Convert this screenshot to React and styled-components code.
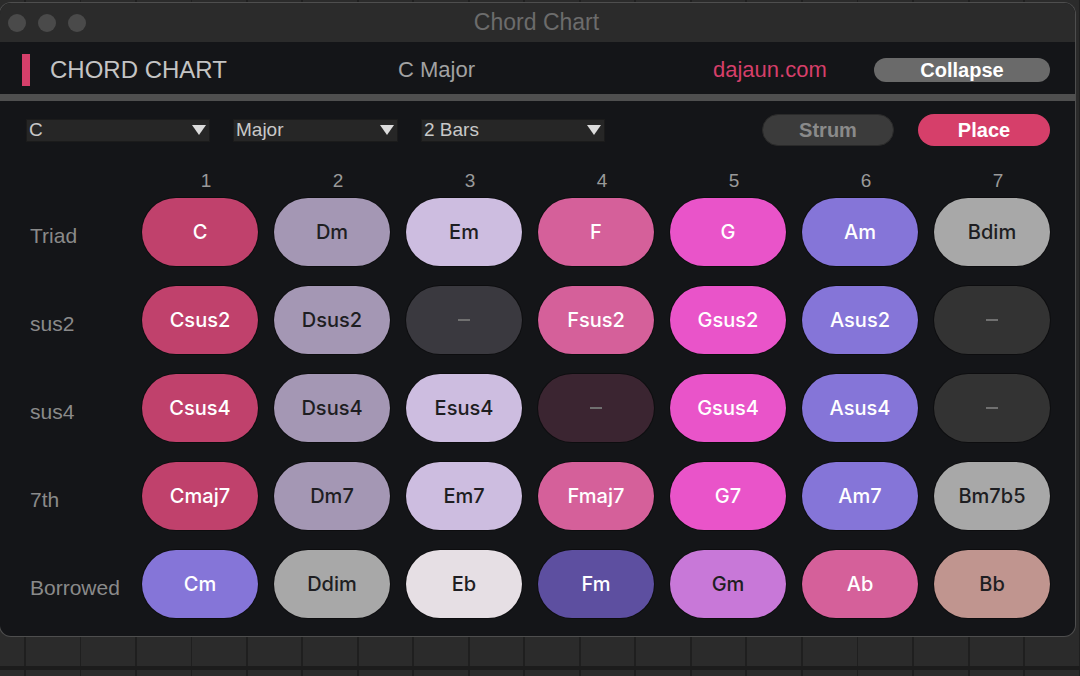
import React from "react";
import styled, { createGlobalStyle } from "styled-components";

const Global = createGlobalStyle`
  html, body { margin: 0; padding: 0; }
  body {
    width: 1080px;
    height: 676px;
    overflow: hidden;
    background-color: #2b2b2b;
    background-image:
      linear-gradient(to bottom, transparent 666px, #1c1c1c 666px, #1c1c1c 670px, transparent 670px),
      repeating-linear-gradient(to right, transparent 0, transparent 24px, #1f1f1f 24px, #1f1f1f 26px, transparent 26px, transparent 55.5px);
    font-family: "Liberation Sans", Arial, sans-serif;
  }
`;

const Page = styled.div`
  padding-top: 3px;
`;

const Window = styled.div`
  width: 1075px;
  height: 633px;
  border-radius: 11px;
  overflow: hidden;
  background: #141518;
  box-shadow: 0 0 0 1px #4e4e4e;
  display: flex;
  flex-direction: column;
`;

const TitleBar = styled.div`
  height: 39px;
  flex: none;
  background: #2b2b2b;
  display: grid;
  grid-template-columns: 1fr auto 1fr;
  align-items: center;
  padding-left: 8px;
  padding-right: 110px;
`;

const Lights = styled.div`
  display: flex;
  gap: 12px;
`;

const Light = styled.span`
  width: 18px;
  height: 18px;
  border-radius: 50%;
  background: #4a4a4a;
`;

const WindowTitle = styled.div`
  color: #6c6c6c;
  font-size: 23px;
  font-weight: 400;
  padding-left: 100px;
`;

const Header = styled.div`
  height: 52px;
  box-sizing: border-box;
  padding-top: 4px;
  flex: none;
  display: grid;
  grid-template-columns: 376px 315px 161px 176px;
  align-items: center;
  padding-left: 22px;
`;

const Brand = styled.div`
  display: flex;
  align-items: center;
  gap: 20px;
`;

const BrandBar = styled.span`
  width: 8px;
  height: 32px;
  background: #d63f6a;
`;

const BrandText = styled.span`
  color: #c4c4c4;
  font-size: 24px;
`;

const KeyName = styled.span`
  color: #a2a2a2;
  font-size: 22px;
`;

const Link = styled.span`
  color: #d63f6a;
  font-size: 22px;
`;

const PillButton = styled.button`
  height: ${(p) => p.$h}px;
  width: ${(p) => p.$w}px;
  border-radius: ${(p) => p.$h / 2}px;
  border: ${(p) => (p.$border ? "1px solid #2a2a2a" : "none")};
  background: ${(p) => p.$bg};
  color: ${(p) => p.$fg};
  font-family: "Liberation Sans", Arial, sans-serif;
  font-weight: 700;
  font-size: 20px;
  padding: 0;
  display: flex;
  align-items: center;
  justify-content: center;
`;

const Separator = styled.div`
  height: 7px;
  flex: none;
  background: #4f4f4f;
`;

const Controls = styled.div`
  display: flex;
  align-items: center;
  padding: 13px 25px 0 26px;
  height: 32px;
  gap: 23px;
`;

const Select = styled.div`
  width: ${(p) => p.$w}px;
  height: 23px;
  box-sizing: border-box;
  background: #262626;
  border: 1px solid #1b1b1b;
  display: flex;
  align-items: center;
  justify-content: space-between;
  padding: 0 3px 0 2px;
  color: #c9c9c9;
  font-size: 19px;
`;

const Arrow = styled.span`
  width: 0;
  height: 0;
  border-left: 7px solid transparent;
  border-right: 7px solid transparent;
  border-top: 10px solid #dcdcdc;
`;

const Spacer = styled.div`
  flex: 1;
`;

const ButtonGroup = styled.div`
  display: flex;
  gap: 24px;
`;

const ColumnHeader = styled.div`
  display: grid;
  grid-template-columns: 126px repeat(7, 116px);
  column-gap: 16px;
  margin-top: 23px;
  margin-bottom: 5px;
  height: 24px;
  align-items: center;
`;

const ColNum = styled.span`
  color: #9a9a9a;
  font-size: 19px;
  text-align: center;
  padding-left: 12px;
`;

const ChordGrid = styled.div`
  display: grid;
  grid-template-columns: 126px repeat(7, 116px);
  grid-auto-rows: 68px;
  column-gap: 16px;
  row-gap: 20px;
`;

const RowLabel = styled.div`
  color: #8a8a8a;
  font-size: 21px;
  padding-left: 30px;
  padding-top: 8px;
  display: flex;
  align-items: center;
  white-space: nowrap;
`;

const Chord = styled.div`
  border-radius: 34px;
  background: ${(p) => p.$bg};
  color: ${(p) => p.$fg};
  box-shadow: 0 0 0 1px rgba(0, 0, 0, 0.35);
  display: flex;
  align-items: center;
  justify-content: center;
  font-family: Inter, "Noto Sans", sans-serif;
  font-weight: 500;
  font-size: 20px;
`;

const Dash = styled.span`
  width: 12px;
  height: 2px;
  background: #707070;
`;

const C1 = "#c0416c", C2 = "#a497b4", C3 = "#cdbde0", C4 = "#d5609a",
  C5 = "#e954c9", C6 = "#8575d8", C7 = "#a8a8a8";
const W = "#ffffff", D = "#1e1e22";

const rows = [
  ["Triad", [["C", C1, W], ["Dm", C2, D], ["Em", C3, D], ["F", C4, W], ["G", C5, W], ["Am", C6, W], ["Bdim", C7, D]]],
  ["sus2", [["Csus2", C1, W], ["Dsus2", C2, D], [null, "#3a393f"], ["Fsus2", C4, W], ["Gsus2", C5, W], ["Asus2", C6, W], [null, "#333333"]]],
  ["sus4", [["Csus4", C1, W], ["Dsus4", C2, D], ["Esus4", C3, D], [null, "#3b2531"], ["Gsus4", C5, W], ["Asus4", C6, W], [null, "#333333"]]],
  ["7th", [["Cmaj7", C1, W], ["Dm7", C2, D], ["Em7", C3, D], ["Fmaj7", C4, W], ["G7", C5, W], ["Am7", C6, W], ["Bm7b5", C7, D]]],
  ["Borrowed", [["Cm", C6, W], ["Ddim", C7, D], ["Eb", "#e6dfe4", D], ["Fm", "#5d4fa0", W], ["Gm", "#c878d8", D], ["Ab", C4, W], ["Bb", "#c0958f", D]]],
];

export default function App() {
  return (
    <Page>
      <Global />
      <Window>
        <TitleBar>
          <Lights>
            <Light />
            <Light />
            <Light />
          </Lights>
          <WindowTitle>Chord Chart</WindowTitle>
          <div />
        </TitleBar>
        <Header>
          <Brand>
            <BrandBar />
            <BrandText>CHORD CHART</BrandText>
          </Brand>
          <KeyName>C Major</KeyName>
          <Link>dajaun.com</Link>
          <PillButton $w={176} $h={24} $bg="#6a6a6a" $fg="#ffffff">Collapse</PillButton>
        </Header>
        <Separator />
        <Controls>
          <Select $w={184}>C<Arrow /></Select>
          <Select $w={165}>Major<Arrow /></Select>
          <Select $w={184}>2 Bars<Arrow /></Select>
          <Spacer />
          <ButtonGroup>
            <PillButton $w={132} $h={32} $bg="#3b3b3b" $fg="#8a8a8a" $border>Strum</PillButton>
            <PillButton $w={132} $h={32} $bg="#d63f6a" $fg="#ffffff">Place</PillButton>
          </ButtonGroup>
        </Controls>
        <ColumnHeader>
          <span />
          {[1, 2, 3, 4, 5, 6, 7].map((n) => (
            <ColNum key={n}>{n}</ColNum>
          ))}
        </ColumnHeader>
        <ChordGrid>
          {rows.map(([label, chords]) => (
            <React.Fragment key={label}>
              <RowLabel>{label}</RowLabel>
              {chords.map(([name, bg, fg], i) => (
                <Chord key={i} $bg={bg} $fg={fg}>
                  {name ? name : <Dash />}
                </Chord>
              ))}
            </React.Fragment>
          ))}
        </ChordGrid>
      </Window>
    </Page>
  );
}
